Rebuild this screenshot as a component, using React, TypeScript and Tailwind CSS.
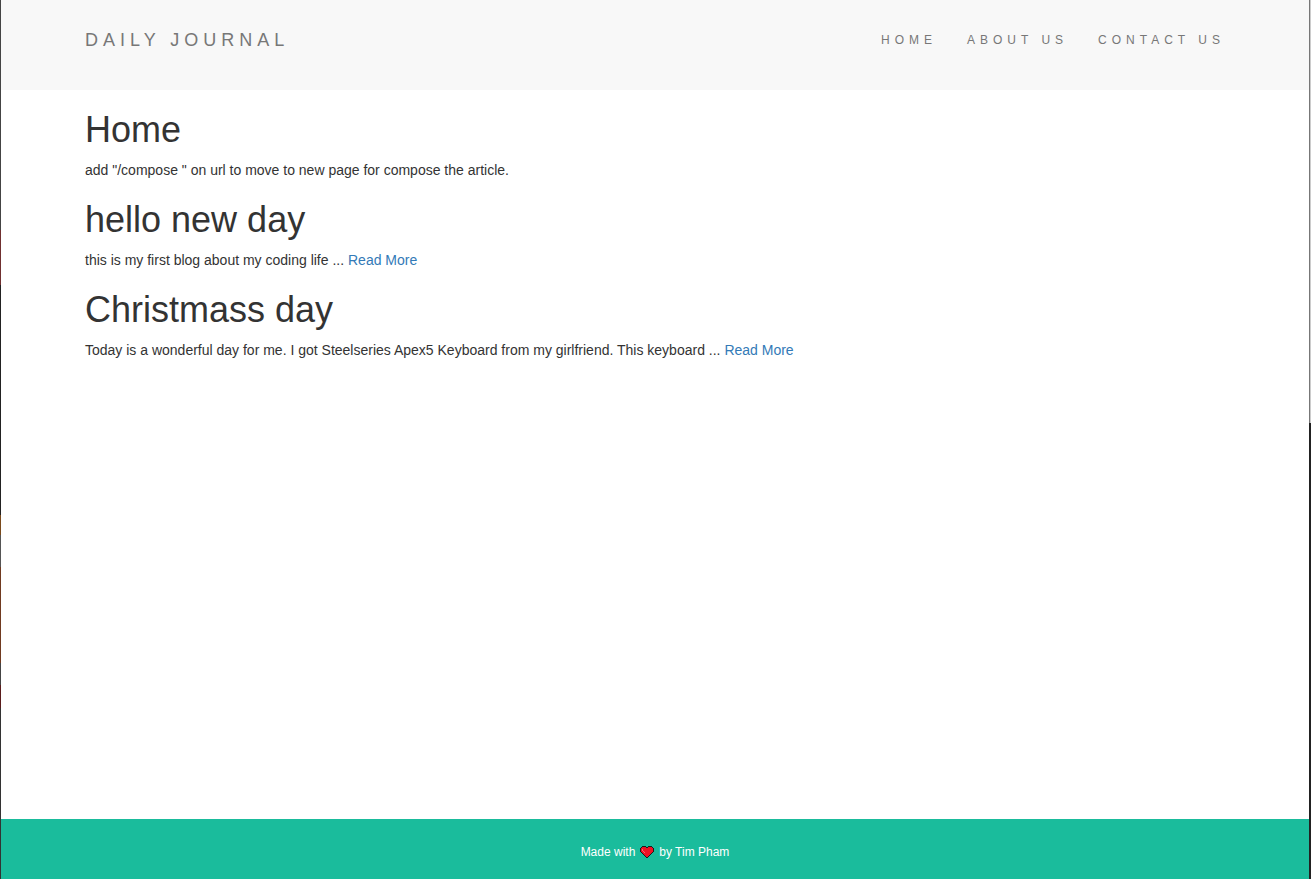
const posts = [
  { title: "hello new day", body: "this is my first blog about my coding life ..." },
  {
    title: "Christmass day",
    body: "Today is a wonderful day for me. I got Steelseries Apex5 Keyboard from my girlfriend. This keyboard ...",
  },
];

const links = ["HOME", "ABOUT US", "CONTACT US"];

function Heart() {
  return (
    <svg viewBox="0 0 14 12" className="h-3 w-3.5" role="img" aria-label="love" shapeRendering="crispEdges">
      <path
        d="M2 0h4v1h2V0h4v1h1v1h1v4h-1v1h-1v1h-1v1h-1v1H9v1H8v1H6v-1H5v-1H4V9H3V8H2V7H1V6H0V2h1V1h1Z"
        fill="#16201e"
      />
      <path d="M2 1h4v1h2V1h4v1h1v4h-1v1h-1v1h-1v1H9v1H8v1H6v-1H5V9H4V8H3V7H2V6H1V2h1Z" fill="#ee1224" />
      <path d="M2 3h1v2H2ZM3 5h1v1H3ZM4 6h1v1H4Z" fill="#f26a72" />
    </svg>
  );
}

export default function App() {
  return (
    <div className="flex min-h-screen bg-white font-['Liberation_Sans',Arial,sans-serif] text-sm leading-5 text-[#333333]">
      <div className="w-px shrink-0 bg-[linear-gradient(#444_0_230px,#703030_230px_285px,#222_285px_515px,#7a4a1c_515px_535px,#555_535px_567px,#703a20_567px_663px,#444_663px_685px,#5a1c1c_685px_708px,#333_708px)]" />
      <div className="flex min-w-0 grow flex-col">
        <header className="bg-[#f8f8f8] pt-[15px] pb-[25px]">
          <nav className="mx-auto flex h-[50px] w-full max-w-[1170px] items-center justify-between pl-[15px] text-[#777777]">
            <a href="#" className="text-lg tracking-[5px]">DAILY JOURNAL</a>
            <ul className="flex">
              {links.map((link) => (
                <li key={link}>
                  <a href="#" className="block px-[15px] text-xs tracking-[5px]">{link}</a>
                </li>
              ))}
            </ul>
          </nav>
        </header>
        <main className="mx-auto w-full max-w-[1170px] grow px-[15px] pt-5">
          <section>
            <h1 className="mb-2.5 text-4xl leading-10">Home</h1>
            <p className="mb-5">add "/compose " on url to move to new page for compose the article.</p>
          </section>
          {posts.map((post) => (
            <article key={post.title}>
              <h1 className="mb-2.5 text-4xl leading-10">{post.title}</h1>
              <p className="mb-5">
                {post.body} <a href="#" className="text-[#337ab7]">Read More</a>
              </p>
            </article>
          ))}
        </main>
        <footer className="flex items-center justify-center bg-[#1abc9c] pt-[25px] pb-[19px] text-xs text-white">
          <p className="flex items-center gap-[5px]">
            Made with <Heart /> by Tim Pham
          </p>
        </footer>
      </div>
      <div className="flex w-0.5 shrink-0">
        <div className="w-px bg-[linear-gradient(#777_0_423px,#222_423px)]" />
        <div className="w-px bg-[linear-gradient(#ccc_0_423px,#222_423px)]" />
      </div>
    </div>
  );
}
